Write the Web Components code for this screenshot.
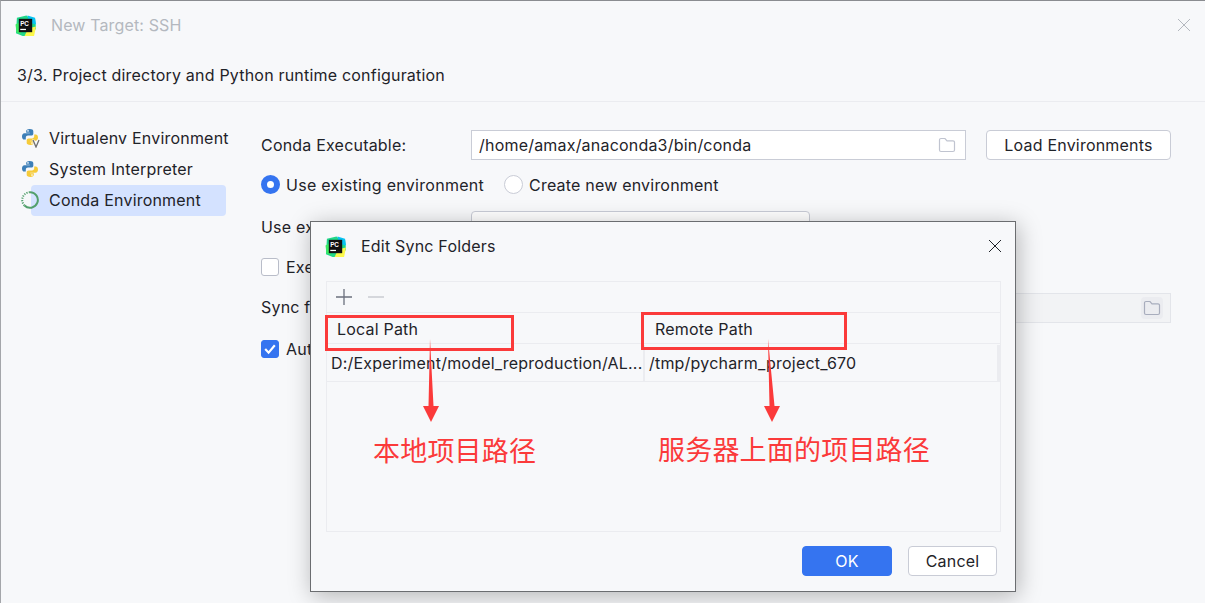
<!DOCTYPE html>
<html>
<head>
<meta charset="utf-8">
<title>New Target: SSH</title>
<style>
    html, body { margin: 0; padding: 0; }
    body {
        width: 1205px;
        height: 603px;
        overflow: hidden;
        font: 16px/20px Inter, "Noto Sans CJK SC", sans-serif;
        letter-spacing: .2px;
        color: #1f2329;
    }
</style>
</head>
<body>
<target-window>
    <side-item slot="side" icon="venv">Virtualenv Environment</side-item>
    <side-item slot="side" icon="python">System Interpreter</side-item>
    <side-item slot="side" icon="conda" selected>Conda Environment</side-item>

    <form-row slot="form" label="Conda Executable:">
        <path-field value="/home/amax/anaconda3/bin/conda"></path-field>
        <ide-button style="width:185px;margin-left:20px">Load Environments</ide-button>
    </form-row>
    <form-row slot="form" style="height:29px;padding-bottom:2px;box-sizing:border-box">
        <ide-radio checked style="letter-spacing:.28px">Use existing environment</ide-radio>
        <ide-radio style="margin-left:20px">Create new environment</ide-radio>
    </form-row>
    <form-row slot="form" label="Use ex" style="--label-top:2px">
        <path-field value="" combo style="flex:0 0 339px"></path-field>
    </form-row>
    <form-row slot="form">
        <ide-check>Exe</ide-check>
    </form-row>
    <form-row slot="form" label="Sync f" style="--label-bottom:2px">
        <path-field value="" disabled></path-field>
    </form-row>
    <form-row slot="form">
        <ide-check checked>Aut</ide-check>
    </form-row>

    <sync-dialog slot="overlay"></sync-dialog>

    <red-box slot="overlay" style="left:324px;top:314px;width:189px;height:36px"></red-box>
    <red-box slot="overlay" style="left:640px;top:311px;width:206px;height:38px"></red-box>
    <red-arrow slot="overlay" style="left:419px;top:338px"></red-arrow>
    <red-arrow slot="overlay" lean style="left:759px;top:338px"></red-arrow>
    <red-note slot="overlay" style="left:372px;top:431px">本地项目路径</red-note>
    <red-note slot="overlay" style="left:657px;top:430px">服务器上面的项目路径</red-note>
</target-window>

<script>
    const pcLogo = `
        <svg class="logo" width="21" height="21" viewBox="0 0 22 22">
            <path d="M2 3 L12 0.5 L15 3 L21 4 L22 14 L18 22 L8 22 L1 19 Z" fill="#21d789"/>
            <path d="M13 0.5 L21 3 L22 10 L15 8 Z" fill="#07c3f2"/>
            <path d="M14 14 L22 12 L20 22 L10 22 Z" fill="#fcf84a"/>
            <path d="M0.5 10 L6 7 L6 20 L1.5 18 Z" fill="#3bea62"/>
            <rect x="4" y="4" width="14" height="14" fill="#111"/>
            <rect x="5.5" y="14.5" width="6" height="1.3" fill="#fff"/>
            <text x="5.4" y="11" font-family="Liberation Sans, sans-serif" font-weight="700" font-size="6.6" letter-spacing="0" fill="#fff">PC</text>
        </svg>`;

    const snake = `
        <path d="M8.7 1C6 1 5.2 2 5.2 3.2V4.7H8.8V5.3H3.4C1.9 5.3 1 6.6 1 8.5 1 10.4 1.9 11.6 3.3 11.6H4.8V9.7C4.8 8.4 5.8 7.6 7 7.6H10.4C11.5 7.6 12.3 6.8 12.3 5.8V3.2C12.3 1.9 11.1 1 8.7 1Z" fill="#3d7fb8"/>
        <path d="M9.3 17C12 17 12.8 16 12.8 14.8V13.3H9.2V12.7H14.6C16.1 12.7 17 11.4 17 9.5 17 7.6 16.1 6.4 14.7 6.4H13.2V8.3C13.2 9.6 12.2 10.4 11 10.4H7.6C6.5 10.4 5.7 11.2 5.7 12.2V14.8C5.7 16.1 6.9 17 9.3 17Z" fill="#f6cb3a"/>
        <circle cx="7" cy="2.9" r=".8" fill="#fff"/><circle cx="11" cy="15.1" r=".8" fill="#fff"/>`;

    const sideIcons = {
        python: `<svg width="18" height="18" viewBox="0 0 18 18">${snake}</svg>`,
        venv: `<svg width="20" height="20" viewBox="0 0 20 20">${snake}
                <path d="M11 11.5H13.2L15 16.5 16.8 11.5H19L16 19.5H14Z" fill="#f7f8fa"/>
                <path d="M12 12L15 19 18 12" fill="none" stroke="#6e6e6e" stroke-width="1.3"/></svg>`,
        conda: `<svg width="18" height="18" viewBox="0 0 18 18">
                <path d="M9 1.2A7.8 7.8 0 1 1 3.5 14.5" fill="none" stroke="#53a06c" stroke-width="2"/>
                <path d="M3.5 14.5A7.8 7.8 0 0 1 9 1.2" fill="none" stroke="#53a06c" stroke-width="2" stroke-dasharray="1.2 1.2"/></svg>`
    };

    const folder = (stroke) => `
        <svg width="18" height="16" viewBox="0 0 18 16">
            <path d="M1.5 13V3A1.5 1.5 0 0 1 3 1.5H7L9 3.8H15A1.5 1.5 0 0 1 16.5 5.3V13A1.5 1.5 0 0 1 15 14.5H3A1.5 1.5 0 0 1 1.5 13Z" fill="none" stroke="${stroke}" stroke-width="1.2"/>
        </svg>`;

    class TargetWindow extends HTMLElement {
        constructor() {
            super();
            this.attachShadow({ mode: 'open' }).innerHTML = `
            <style>
                :host {
                    display: block;
                    position: relative;
                    box-sizing: border-box;
                    width: 1205px;
                    height: 603px;
                    background: #f7f8fa;
                    border-top: 1px solid #8a8c90;
                    border-left: 1px solid #a4a6aa;
                    overflow: hidden;
                }
                .title {
                    display: flex;
                    align-items: center;
                    height: 48px;
                    padding-left: 14px;
                    color: #b4b8bf;
                    letter-spacing: .13px;
                }
                .title span { margin-left: 15px; }
                .close { margin-left: auto; margin-right: 14px; display: flex; }
                .step {
                    height: 53px;
                    padding-left: 16px;
                    line-height: 52px;
                    border-bottom: 1px solid #ebecf0;
                    box-sizing: border-box;
                }
                .body { display: flex; }
                .side {
                    flex: 0 0 225px;
                    width: 225px;
                    padding-top: 21px;
                    box-sizing: border-box;
                    padding-left: 20px;
                }
                .form {
                    flex: 0 0 auto;
                    width: 910px;
                    padding: 28px 0 0 35px;
                    display: flex;
                    flex-direction: column;
                    gap: 11px;
                }
            </style>
            <div class="title">
                ${pcLogo}
                <span>New Target: SSH</span>
                <div class="close">
                    <svg width="14" height="14" viewBox="0 0 14 14"><path d="M1 1L13 13M13 1L1 13" stroke="#b4b8bf" stroke-width="1"/></svg>
                </div>
            </div>
            <div class="step">3/3. Project directory and Python runtime configuration</div>
            <div class="body">
                <div class="side"><slot name="side"></slot></div>
                <div class="form"><slot name="form"></slot></div>
            </div>
            <slot name="overlay"></slot>`;
        }
    }

    class SideItem extends HTMLElement {
        constructor() {
            super();
            this.attachShadow({ mode: 'open' }).innerHTML = `
            <style>
                :host {
                    display: flex;
                    align-items: center;
                    position: relative;
                    height: 31px;
                    padding-bottom: 2px;
                    box-sizing: border-box;
                    white-space: nowrap;
                }
                .icon { width: 28px; display: flex; flex: none; }
                .label { flex: 1; }
                .bg {
                    display: none;
                    position: absolute;
                    left: 10px;
                    width: 195px;
                    top: 0;
                    bottom: 0;
                    border-radius: 4px;
                    background: #d4e2ff;
                }
                :host([selected]) .bg { display: block; }
                .icon, .label { position: relative; }
            </style>
            <div class="bg"></div>
            <div class="icon">${sideIcons[this.getAttribute('icon')]}</div>
            <div class="label"><slot></slot></div>`;
        }
    }

    class FormRow extends HTMLElement {
        constructor() {
            super();
            const label = this.getAttribute('label');
            this.attachShadow({ mode: 'open' }).innerHTML = `
            <style>
                :host { display: flex; align-items: center; height: 30px; white-space: nowrap; }
                .label {
                    flex: 0 0 210px;
                    padding-top: var(--label-top, 0);
                    padding-bottom: var(--label-bottom, 0);
                }
            </style>
            ${label ? `<div class="label">${label}</div>` : ''}
            <slot></slot>`;
        }
    }

    class PathField extends HTMLElement {
        constructor() {
            super();
            const disabled = this.hasAttribute('disabled');
            const combo = this.hasAttribute('combo');
            this.attachShadow({ mode: 'open' }).innerHTML = `
            <style>
                :host {
                    display: flex;
                    align-items: center;
                    flex: 1;
                    height: 30px;
                    box-sizing: border-box;
                    padding: 0 9px 0 7px;
                    background: #fff;
                    border: 1px solid #c9ccd6;
                }
                :host([disabled]) { background: #f2f3f5; border-color: #e3e5ea; }
                :host([combo]) { border-radius: 4px; }
                .v { flex: 1; }
                .f { display: flex; }
                :host([disabled]) .f { background: #ebecf0; border-radius: 4px; padding: 3px 2px; margin-right: -2px; }
            </style>
            <div class="v">${this.getAttribute('value')}</div>
            ${combo ? '' : `<div class="f">${folder(disabled ? '#a8adbd' : '#c0c4d0')}</div>`}`;
        }
    }

    class IdeButton extends HTMLElement {
        constructor() {
            super();
            this.attachShadow({ mode: 'open' }).innerHTML = `
            <style>
                :host {
                    display: flex;
                    align-items: center;
                    justify-content: center;
                    height: 30px;
                    box-sizing: border-box;
                    background: #fff;
                    border: 1px solid #c9ccd6;
                    border-radius: 4px;
                }
                :host([primary]) { background: #3574f0; border-color: #3574f0; color: #fff; }
            </style>
            <slot></slot>`;
        }
    }

    class IdeRadio extends HTMLElement {
        constructor() {
            super();
            this.attachShadow({ mode: 'open' }).innerHTML = `
            <style>
                :host { display: inline-flex; align-items: center; gap: 6px; }
                .dot {
                    width: 19px; height: 19px;
                    box-sizing: border-box;
                    border-radius: 50%;
                    border: 1px solid #c9ccd6;
                    background: #fff;
                }
                :host([checked]) .dot { border: 6px solid #3574f0; }
            </style>
            <div class="dot"></div>
            <div><slot></slot></div>`;
        }
    }

    class IdeCheck extends HTMLElement {
        constructor() {
            super();
            const checked = this.hasAttribute('checked');
            this.attachShadow({ mode: 'open' }).innerHTML = `
            <style>
                :host { display: inline-flex; align-items: center; gap: 7px; }
                .box {
                    width: 18px; height: 18px;
                    box-sizing: border-box;
                    border-radius: 3px;
                    border: 1px solid #b9bdc9;
                    background: #fff;
                    display: flex;
                }
                :host([checked]) .box { background: #3574f0; border-color: #3574f0; }
            </style>
            <div class="box">${checked ? '<svg width="16" height="16" viewBox="0 0 15 15"><path d="M3 7.5L6.2 11 12 4" fill="none" stroke="#fff" stroke-width="2"/></svg>' : ''}</div>
            <div><slot></slot></div>`;
        }
    }

    class SyncDialog extends HTMLElement {
        constructor() {
            super();
            this.attachShadow({ mode: 'open' }).innerHTML = `
            <style>
                :host {
                    position: absolute;
                    left: 309px;
                    top: 220px;
                    width: 706px;
                    height: 371px;
                    box-sizing: border-box;
                    display: flex;
                    flex-direction: column;
                    background: #f7f8fa;
                    border: 1px solid #6b6d70;
                    box-shadow: 2px 4px 22px rgba(0, 0, 0, .28);
                    padding: 0 14px 15px 15px;
                }
                .head { display: flex; align-items: flex-start; height: 59px; flex: none; padding-top: 14px; box-sizing: border-box; }
                .head .logo { margin-left: -1px; }
                .head span { margin-left: 15px; }
                .head svg.x { margin-left: auto; margin-right: -1px; margin-top: 3px; }
                .table {
                    flex: 1;
                    border: 1px solid #ebecf0;
                    display: flex;
                    flex-direction: column;
                    width: 675px;
                    box-sizing: border-box;
                }
                .tools {
                    height: 31px;
                    flex: none;
                    box-sizing: border-box;
                    border-bottom: 1px solid #ebecf0;
                    display: flex;
                    align-items: center;
                    padding-left: 8px;
                    gap: 14px;
                }
                .cols, .row { display: grid; grid-template-columns: 316px 1fr; flex: none; }
                .cols { height: 31px; line-height: 33px; border-bottom: 1px solid #ebecf0; box-sizing: border-box; }
                .cols div:first-child { padding-left: 10px; }
                .cols div:last-child { padding-left: 12px; }
                .row {
                    height: 37px;
                    line-height: 37px;
                    box-sizing: border-box;
                    border-bottom: 1px solid #ebecf0;
                    margin-top: 1px;
                    border-right: 3px solid #ebecf0;
                }
                .row div { padding-left: 4px; white-space: nowrap; overflow: hidden; }
                .row div:last-child { border-left: 2px solid #ebecf0; padding-left: 4px; }
                .foot { display: flex; justify-content: flex-end; gap: 16px; padding: 14px 4px 0 0; flex: none; }
                .foot ide-button { width: 90px; }
            </style>
            <div class="head">
                ${pcLogo}
                <span>Edit Sync Folders</span>
                <svg class="x" width="14" height="14" viewBox="0 0 14 14"><path d="M1 1L13 13M13 1L1 13" stroke="#1f2329" stroke-width="1"/></svg>
            </div>
            <div class="table">
                <div class="tools">
                    <svg width="18" height="18" viewBox="0 0 18 18"><path d="M9 1V17M1 9H17" stroke="#6c707e" stroke-width="1.3"/></svg>
                    <svg width="18" height="18" viewBox="0 0 18 18"><path d="M1 9H17" stroke="#c3c5cc" stroke-width="1.3"/></svg>
                </div>
                <div class="cols"><div>Local Path</div><div>Remote Path</div></div>
                <div class="row">
                    <div>D:/Experiment/model_reproduction/AL...</div>
                    <div>/tmp/pycharm_project_670</div>
                </div>
            </div>
            <div class="foot">
                <ide-button primary>OK</ide-button>
                <ide-button style="width:89px">Cancel</ide-button>
            </div>`;
        }
    }

    class RedBox extends HTMLElement {
        constructor() {
            super();
            this.attachShadow({ mode: 'open' }).innerHTML = `
            <style>
                :host { position: absolute; box-sizing: border-box; border: 3px solid #fb3a3a; }
            </style>`;
        }
    }

    class RedArrow extends HTMLElement {
        constructor() {
            super();
            const tip = this.hasAttribute('lean') ? 12 : 11;
            const top = this.hasAttribute('lean') ? 8 : 10;
            this.attachShadow({ mode: 'open' }).innerHTML = `
            <style>
                :host { position: absolute; display: block; width: 24px; height: 86px; }
            </style>
            <svg width="24" height="86" viewBox="0 0 24 86">
                <path d="M${top} 0 L${tip + 2.5} 67 L${tip + 8} 67 L${tip} 83 L${tip - 8} 67 L${tip - 2.5} 67 Z" fill="#fb3a3a"/>
            </svg>`;
        }
    }

    class RedNote extends HTMLElement {
        constructor() {
            super();
            this.attachShadow({ mode: 'open' }).innerHTML = `
            <style>
                :host {
                    position: absolute;
                    font: 27px/36px "Noto Sans CJK SC", sans-serif;
                    letter-spacing: .2px;
                    color: #fb3a3a;
                    white-space: nowrap;
                }
            </style>
            <slot></slot>`;
        }
    }

    customElements.define('ide-button', IdeButton);
    customElements.define('ide-radio', IdeRadio);
    customElements.define('ide-check', IdeCheck);
    customElements.define('path-field', PathField);
    customElements.define('form-row', FormRow);
    customElements.define('side-item', SideItem);
    customElements.define('sync-dialog', SyncDialog);
    customElements.define('red-box', RedBox);
    customElements.define('red-arrow', RedArrow);
    customElements.define('red-note', RedNote);
    customElements.define('target-window', TargetWindow);
</script>
</body>
</html>
